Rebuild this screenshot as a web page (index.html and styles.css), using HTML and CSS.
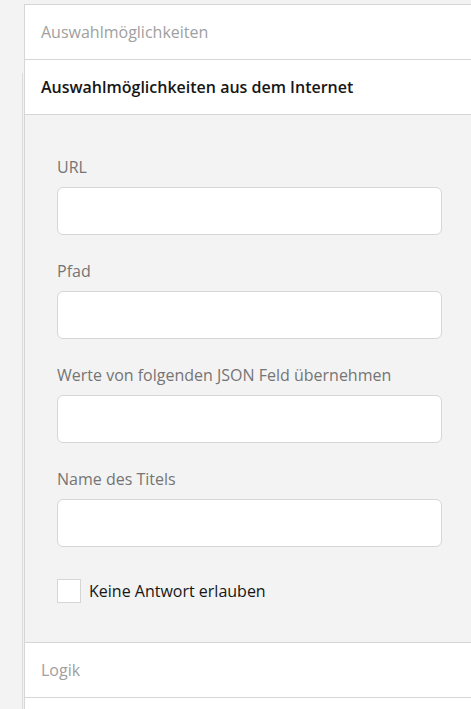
FILE: index.html
```html
<!DOCTYPE html>
<html lang="de">
<head>
<meta charset="utf-8">
<link rel="stylesheet" href="styles.css">
</head>
<body>
<div class="page">
  <div class="gutter"><div class="gutter-line"></div></div>
  <div class="panel">
    <div class="section-header">Auswahlmöglichkeiten</div>
    <div class="section-header active">Auswahlmöglichkeiten aus dem Internet</div>
    <div class="section-content">
      <div class="field">
        <label class="field-label">URL</label>
        <input class="field-input" type="text">
      </div>
      <div class="field">
        <label class="field-label">Pfad</label>
        <input class="field-input" type="text">
      </div>
      <div class="field">
        <label class="field-label">Werte von folgenden JSON Feld übernehmen</label>
        <input class="field-input" type="text">
      </div>
      <div class="field">
        <label class="field-label">Name des Titels</label>
        <input class="field-input" type="text">
      </div>
      <label class="check-row">
        <span class="check-box"></span>
        <span class="check-text">Keine Antwort erlauben</span>
      </label>
    </div>
    <div class="section-header">Logik</div>
  </div>
</div>
</body>
</html>
```

FILE: styles.css
```css
html, body {
  margin: 0;
  padding: 0;
  background: #f3f3f3;
  font-family: "Open Sans", "Liberation Sans", sans-serif;
  font-size: 16px;
  line-height: 24px;
}

.page {
  display: flex;
  width: 471px;
  height: 709px;
  overflow: hidden;
}

.gutter {
  width: 24px;
  flex-shrink: 0;
  display: flex;
  justify-content: flex-end;
}

.gutter-line {
  margin-top: 73px;
  margin-right: 1px;
  width: 1px;
  background: #dcdcdc;
}

.panel {
  flex: 1;
  margin-top: 4px;
  border-top: 1px solid #d6d6d6;
  border-left: 1px solid #d6d6d6;
  background: #ffffff;
  display: flex;
  flex-direction: column;
}

.section-header {
  height: 55px;
  flex-shrink: 0;
  box-sizing: border-box;
  padding: 15px 16px;
  border-bottom: 1px solid #d6d6d6;
  color: #a0a0a0;
  background: #ffffff;
  white-space: nowrap;
}

.section-header.active {
  color: #161616;
  font-weight: 600;
}

.section-content {
  background: #f3f3f3;
  padding: 40px 29px 39px 32px;
  border-bottom: 1px solid #d6d6d6;
  display: flex;
  flex-direction: column;
}

.field {
  display: flex;
  flex-direction: column;
  gap: 8px;
  margin-bottom: 24px;
}

.field-label {
  color: #757575;
  white-space: nowrap;
}

.field-input {
  height: 48px;
  box-sizing: border-box;
  border: 1px solid #d6d6d6;
  border-radius: 6px;
  background: #ffffff;
  margin: 0;
  padding: 0 12px;
  font: inherit;
  outline: none;
}

.check-row {
  display: flex;
  align-items: center;
  gap: 8px;
  margin-top: 8px;
  color: #161616;
}

.check-box {
  width: 24px;
  height: 24px;
  box-sizing: border-box;
  border: 1px solid #d6d6d6;
  background: #ffffff;
}
```
